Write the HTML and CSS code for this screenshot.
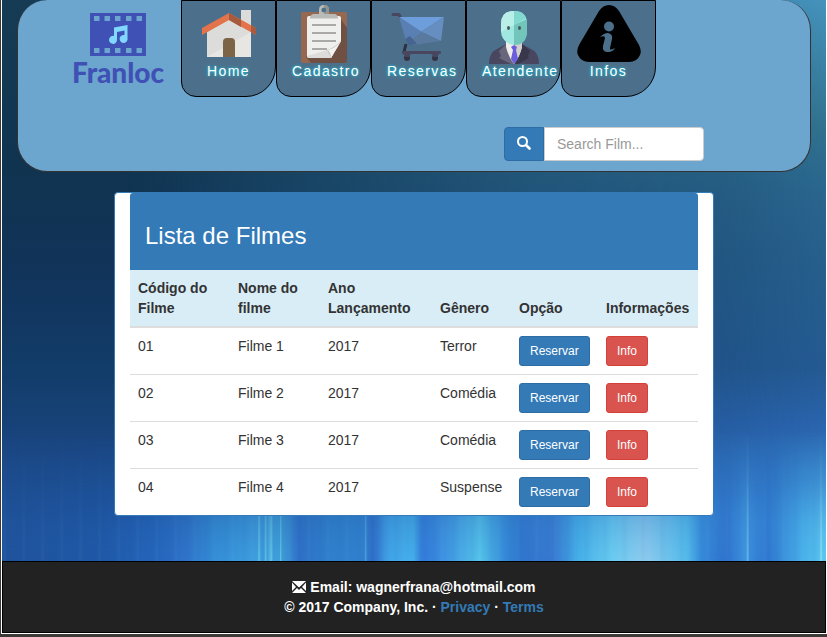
FILE: index.html
```html
<!DOCTYPE html>
<html lang="pt-BR">
<head>
<meta charset="utf-8">
<meta name="viewport" content="width=device-width, initial-scale=1">
<title>Franloc</title>
<link rel="stylesheet" href="styles.css">
</head>
<body>
<div class="window">
  <header class="header">
    <div class="bar">
      <a class="logo" href="#">
        <svg class="film" viewBox="0 0 56 43" aria-hidden="true">
          <path fill="#3f51b5" fill-rule="evenodd" d="M0 0h56v43H0zM4 3v5h5.500V3zM14.500 3v5H20V3zM25 3v5h5.500V3zM36 3v5h5.500V3zM46.500 3v5H52V3zM4 35v5h5.500v-5zM14.500 35v5H20v-5zM25 35v5h5.500v-5zM36 35v5h5.500v-5zM46.500 35v5H52v-5z"/>
          <path fill="#80d8ff" d="M24 14.500L37.500 12v13a4 4 0 1 1-3-3v-4.500l-7.500 1.500v8a4 4 0 1 1-3-4z"/>
        </svg>
        <span>Franloc</span>
      </a>
      <nav class="nav">
        <a class="tab" href="#">
          <svg class="icon" viewBox="0 0 64 64" aria-hidden="true">
            <path fill="#dcdcda" d="M44 9h10v32H44zM10 31L32 17l22 14v25H10z"/>
            <path fill="#e8e6e2" d="M10 56l44-25v25z"/>
            <path fill="#e2734a" d="M32 12L5 27v7l27-15 27 15v-7z"/>
            <path fill="#a65a3e" d="M32 12l12 7v7l-12-7zM54 24.500l5 2.500v7l-5-3z"/>
            <path fill="#7d6447" d="M26 56V41q0-4 4-4h4q4 0 4 4v15z"/>
          </svg>
          <span>Home</span>
        </a>
        <a class="tab" href="#">
          <svg class="icon" viewBox="0 0 64 64" aria-hidden="true">
            <rect x="9" y="11" width="46" height="51" rx="2" fill="#976850"/>
            <path fill="#6f5042" d="M48 17l7 10v33q0 2-2 2H19l-5-6z"/>
            <path fill="#efefed" d="M15 17q0-2 2-2h30q2 0 2 2v23L39 57H17q-2 0-2-2z"/>
            <path fill="#dcdcda" d="M35 49L15 55q0 2 2 2h22z"/>
            <path fill="#c4c3bf" d="M49 40q-7 7-14 9l4 8z"/>
            <path fill="#f3f3f1" d="M49 40L39 57q0-5-3-8 8-2 13-9z"/>
            <path stroke="#aaa9a7" stroke-width="2" d="M20 24h24M20 32h24M20 40h24M20 48h15"/>
            <path fill="#b9bbb8" fill-rule="evenodd" d="M27 13V9q0-5 5-5t5 5v4h5q4 0 4 4.500H18q0-4.500 4-4.500zM32 6.500a2.500 2.500 0 1 0 0 5 2.500 2.500 0 0 0 0-5z"/>
            <path fill="#92938e" d="M32 4q5 0 5 5v4h-5v-1.500a2.500 2.500 0 0 0 0-5z"/>
          </svg>
          <span>Cadastro</span>
        </a>
        <a class="tab" href="#">
          <svg class="icon" viewBox="0 0 64 64" aria-hidden="true">
            <path fill="none" stroke="#494760" stroke-width="3" stroke-linecap="round" stroke-linejoin="round" d="M6 13.500h6l2 4"/>
            <path stroke="#2e3041" stroke-width="3" d="M19 43l-2 8"/>
            <path fill="#6d9ddb" d="M12 16h45L34 31z"/>
            <path fill="#668ec1" d="M57 16l-3 24-20-9z"/>
            <path fill="#5a80b3" d="M12 16l23 15-13 11-3-2z"/>
            <path fill="#59799f" d="M35 31l19 9-27 4-6-2z"/>
            <path fill="#45648f" d="M23 35l7 8-8 1-4-6z"/>
            <rect x="15" y="50" width="39" height="3" rx="1" fill="#494760"/>
            <circle cx="20" cy="57" r="3" fill="#343346"/><circle cx="48" cy="57" r="3" fill="#343346"/>
            <path fill="#494760" d="M16 53h8l-2 3h-3zM44 53h8l-2 3h-3z"/>
          </svg>
          <span>Reservas</span>
        </a>
        <a class="tab" href="#">
          <svg class="icon" viewBox="0 0 64 64" aria-hidden="true">
            <path fill="#494760" d="M7 63q0-12 8-15l9-5h16l9 5q8 3 8 15z"/>
            <path fill="#68667c" d="M24 43L17 50l2 5-2 2 12 6h3z"/>
            <path fill="#38374b" d="M40 43l8 7-2 5 1 2-11 6h-4z"/>
            <path fill="#efecec" d="M24 40v6q2 9 8 17 6-8 8-17v-6z"/>
            <path fill="#d2cfcf" d="M32 40v23q6-8 8-17v-6z"/>
            <path fill="#6b5ddd" d="M29 46l3-2 3 2-1 3 2 9-4 5-3-5 2-9z"/>
            <path fill="#9fe7e0" d="M19 23q0-13 13-13t13 13v7q0 8-7 12-6 4-12 0-7-4-7-12z"/>
            <path fill="#baefe9" d="M32 10v14L19 31v-8q0-13 13-13z"/>
            <path fill="#82d9d0" d="M32 10q9 0 12 7l-12 7z"/>
            <path fill="#72c5bb" d="M32 24l13-6v12q0 14-13 14z"/>
            <ellipse cx="26.500" cy="27" rx="1.500" ry="2" fill="#465b5b"/><ellipse cx="37.500" cy="27" rx="1.500" ry="2" fill="#465b5b"/>
          </svg>
          <span>Atendente</span>
        </a>
        <a class="tab" href="#">
          <svg class="icon" viewBox="0 0 64 64" aria-hidden="true">
            <path d="M22 10Q26 4 32 4t10 6l20 34q3 6 1 10-3 7-11 7H12Q4 61 1 54q-2-4 1-10z"/>
            <circle cx="32" cy="25.500" r="5" fill="#4c708b"/>
            <path fill="#4c708b" d="M23 36q4-4 8-4 5 1 4 6l-2 9q-1 3 5 0-2 4-7 4-6 0-5-6l2-8q0-3-5-1z"/>
          </svg>
          <span>Infos</span>
        </a>
      </nav>
    </div>
    <form class="search">
      <button class="search-button" type="button" aria-label="Search">
        <svg viewBox="0 0 14 14" aria-hidden="true"><circle cx="5.500" cy="5.500" r="4.500" fill="none" stroke="#fff" stroke-width="2"/><path stroke="#fff" stroke-width="2.600" stroke-linecap="round" d="M9.500 9.500l3 3"/></svg>
      </button>
      <input class="search-input" type="text" placeholder="Search Film..." aria-label="Search Film">
    </form>
  </header>

  <main class="panel">
    <div class="panel-heading"><h1>Lista de Filmes</h1></div>
    <table>
      <colgroup><col class="col-code"><col class="col-name"><col class="col-year"><col class="col-genre"><col class="col-option"><col></colgroup>
      <thead>
        <tr><th>Código do Filme</th><th>Nome do filme</th><th>Ano Lançamento</th><th>Gênero</th><th>Opção</th><th>Informações</th></tr>
      </thead>
      <tbody>
        <tr><td>01</td><td>Filme 1</td><td>2017</td><td>Terror</td><td><button class="btn primary" type="button">Reservar</button></td><td><button class="btn danger" type="button">Info</button></td></tr>
        <tr><td>02</td><td>Filme 2</td><td>2017</td><td>Comédia</td><td><button class="btn primary" type="button">Reservar</button></td><td><button class="btn danger" type="button">Info</button></td></tr>
        <tr><td>03</td><td>Filme 3</td><td>2017</td><td>Comédia</td><td><button class="btn primary" type="button">Reservar</button></td><td><button class="btn danger" type="button">Info</button></td></tr>
        <tr><td>04</td><td>Filme 4</td><td>2017</td><td>Suspense</td><td><button class="btn primary" type="button">Reservar</button></td><td><button class="btn danger" type="button">Info</button></td></tr>
      </tbody>
    </table>
  </main>

  <footer class="footer">
    <div><svg class="mail" viewBox="0 0 14 12" aria-hidden="true"><path fill="#fff" d="M0 0h14L7 6.500zM0 1.500L4 6l-4 4zM14 1.500L10 6l4 4zM0 12l5-5 2 2 2-2 5 5z"/></svg> Email: wagnerfrana@hotmail.com</div>
    <div>© 2017 Company, Inc. · <a href="#">Privacy</a> · <a href="#">Terms</a></div>
  </footer>
</div>
</body>
</html>
```
FILE: styles.css
```css
* {
  box-sizing: border-box;
}

html {
  background: #3c3b37;
}

body {
  margin: 0;
  padding: 0 0 3px 1px;
  color: #333;
  font: 14px/20px "Liberation Sans", Arial, sans-serif;
}

a {
  color: #337ab7;
  text-decoration: none;
}

.window {
  position: relative;
  z-index: 0;
  border: 1px solid #fff;
  border-top: 0;
  background: linear-gradient(180deg, #163c55 0, #103450 27%, #113359 42%, #123d6b 60%, #1a4580 71%, #1c4e92 81%, #2460b0 89%);
}

/* Backdrop: a lighter right side, and rays of light that rise from the footer */
.window::before,
.window::after {
  position: absolute;
  z-index: -1;
  inset: 0;
  content: "";
}

.window::before {
  background: linear-gradient(180deg, #4593bd 0, #31728f 20%, #2a668f 30%, #265f8c 42%, #245a92 58%, #2a64ad 67%, #327cc9 78%, #45aae8 89%);
  mask-image: linear-gradient(90deg, transparent 15%, #0005 38%, #000a 65%, #000c 88%, #000);
}

.window::after {
  background:
    linear-gradient(90deg, transparent 31%, #7fe0ee99 31.200%, transparent 31.400%, transparent 31.800%, #7fe0ee88 32%, transparent 32.200%, #7fe0ee88 32.700%, transparent 32.900%, transparent 33.700%, #7fe0ee88 33.800%, transparent 34%, transparent 44%, #7fd0ee66 44.100%, transparent 44.300%, transparent 90.300%, #8fe0f588 90.500%, transparent 90.700%, transparent 99.200%, #b0f0ff99 99.400%, transparent 99.600%),
    repeating-linear-gradient(90deg, transparent 0, #8fdfff0c 3px, transparent 5px, transparent 11px, #1050a00c 14px, transparent 19px),
    linear-gradient(90deg, #20529a 0, #1f58a6 12%, #2566bc 19%, #2f72c8 22%, #3590d8 26%, #3f9fdf 31%, #3fa0d8 34%, #2f70c8 36%, #2f80cc 40%, #3080cf 44%, #2f6cc8 45%, #41a5e8 47%, #45afea 50%, #3078d8 51%, #3b8be0 53%, #55c4ea 58%, #358ad8 61%, #2f74cc 63%, #3878d0 67%, #45b0e8 70%, #6accf0 74%, #90ccee 78%, #55bdea 83%, #3588d8 85%, #2f70cc 88%, #3c90dd 90%, #2f75cf 93%, #48aee8 97%, #5cc8ee 100%);
  mask-image: linear-gradient(180deg, transparent 68%, #0005 76%, #000b 83%, #000 89%);
}

.header {
  margin: 0 15px;
  padding-bottom: 10px;
  border: 1px solid #333;
  border-top: 0;
  border-radius: 30px;
  background: #6ca5cd;
}

.bar {
  display: flex;
  align-items: flex-start;
  padding-left: 52px;
}

.logo {
  display: flex;
  flex-direction: column;
  align-items: center;
  width: 96px;
  margin-right: 15px;
  padding-top: 13px;
  color: #3f51b5;
  font: 900 28px/32px Lato, sans-serif;
}

.film {
  width: 56px;
  height: 43px;
}

.nav {
  display: flex;
}

.tab {
  width: 95px;
  height: 97px;
  padding: 0 15px;
  border: 1px solid #000;
  border-radius: 0 0 30px 15px;
  background: #4c708b;
  color: #fff;
  letter-spacing: 0.1em;
  text-align: center;
  text-shadow: 0 0 3px #00e5ff;
}

.icon {
  display: block;
  width: 64px;
  height: 64px;
  margin-bottom: -4px;
}

.search {
  display: flex;
  width: 200px;
  margin: 30px 106px 0 auto;
}

.search-button {
  width: 40px;
  height: 34px;
  padding: 0;
  border: 1px solid #2e6da4;
  border-radius: 4px 0 0 4px;
  background: #337ab7;
}

.search-button svg {
  width: 14px;
  height: 14px;
}

.search-input {
  flex: 1;
  min-width: 0;
  height: 34px;
  padding: 6px 12px;
  border: 1px solid #ccc;
  border-radius: 0 4px 4px 0;
  background: #fff;
  font: inherit;
}

.search-input::placeholder {
  color: #999;
}

.panel {
  max-width: 600px;
  margin: 20px auto 45px;
  padding: 0 15px;
  border: 1px solid #337ab7;
  border-radius: 4px;
  background: #fff;
}

.panel-heading {
  padding: 30px 15px 21px;
  border-radius: 3px 3px 0 0;
  background: #337ab7;
  color: #fff;
}

h1 {
  margin: 0;
  font-size: 24px;
  font-weight: 400;
  line-height: 26px;
}

table {
  width: 100%;
  border-collapse: collapse;
  table-layout: fixed;
}

.col-code {
  width: 100px;
}

.col-name {
  width: 90px;
}

.col-year {
  width: 112px;
}

.col-genre {
  width: 79px;
}

.col-option {
  width: 87px;
}

th,
td {
  padding: 8px;
  text-align: left;
}

th {
  border-bottom: 2px solid #ddd;
  background: #d9edf7;
  vertical-align: bottom;
}

td {
  border-top: 1px solid #ddd;
  vertical-align: top;
}

.btn {
  display: block;
  height: 30px;
  padding: 5px 10px;
  border: 1px solid;
  border-radius: 3px;
  color: #fff;
  font: 12px/18px "Liberation Sans", Arial, sans-serif;
}

.primary {
  border-color: #2e6da4;
  background: #337ab7;
}

.danger {
  border-color: #d43f3a;
  background: #d9534f;
}

.footer {
  padding: 15px;
  border: 1px solid #000;
  background: #222;
  color: #fff;
  font-weight: 700;
  text-align: center;
}

.mail {
  width: 14px;
  height: 12px;
  vertical-align: -1px;
}
```
